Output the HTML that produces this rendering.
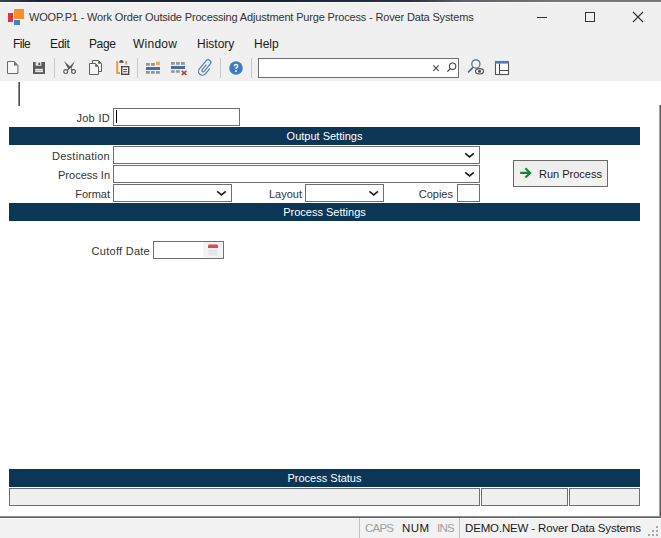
<!DOCTYPE html>
<html><head><meta charset="utf-8">
<style>
*{margin:0;padding:0;box-sizing:border-box}
html,body{width:661px;height:538px;overflow:hidden;background:#fff}
body{position:relative;font-family:"Liberation Sans",sans-serif;font-size:11px;color:#222}
.a{position:absolute}
.t{position:absolute;white-space:nowrap;line-height:13px}
#topbar{left:0;top:0;width:661px;height:2px;background:linear-gradient(to right,#3a4050 0%,#1e2438 6%,#1c2236 40%,#2a3044 62%,#5e6068 70%,#7a7676 85%,#7c7878 100%)}
#chrome{left:0;top:2px;width:661px;height:79px;background:#f0f0f0;border-top:1px solid #fafafa}
.inp{position:absolute;background:#fff;border:1px solid #707070}
.hdr{position:absolute;left:9px;width:631px;height:18px;background:#0b3656;color:#fff;text-align:center;font-size:11px;line-height:18px}
.chev{position:absolute;width:10px;height:6px}
.lbl{position:absolute;white-space:nowrap;line-height:13px;color:#333;text-align:right}
.sb{position:absolute;background:#efefef;border:1px solid #6e6e6e}
</style></head><body>
<div id="topbar" class="a"></div>
<div id="chrome" class="a"></div>

<!-- app icon -->
<div class="a" style="left:8px;top:13px;width:5px;height:9px;background:#d8334a"></div>
<div class="a" style="left:14px;top:9px;width:10px;height:10px;background:#f7902a"></div>
<div class="a" style="left:14px;top:20px;width:6px;height:5px;background:#3f84c9"></div>
<div class="t" style="left:29px;top:11px;font-size:11px;letter-spacing:-0.16px;color:#333">WOOP.P1 - Work Order Outside Processing Adjustment Purge Process - Rover Data Systems</div>

<!-- window controls -->
<div class="a" style="left:537px;top:17px;width:10px;height:1px;background:#333"></div>
<div class="a" style="left:585px;top:12px;width:10px;height:10px;border:1px solid #333"></div>
<svg class="a" style="left:632px;top:11px" width="12" height="12" viewBox="0 0 12 12"><path d="M1 1L11 11M11 1L1 11" stroke="#333" stroke-width="1.1" fill="none"/></svg>

<!-- menu -->
<div class="t" style="left:13px;top:38px;font-size:12px;letter-spacing:-0.55px;color:#1a1a1a">File</div>
<div class="t" style="left:50px;top:38px;font-size:12px;letter-spacing:-0.3px;color:#1a1a1a">Edit</div>
<div class="t" style="left:89px;top:38px;font-size:12px;letter-spacing:-0.4px;color:#1a1a1a">Page</div>
<div class="t" style="left:133px;top:38px;font-size:12px;letter-spacing:0.25px;color:#1a1a1a">Window</div>
<div class="t" style="left:197px;top:38px;font-size:12px;color:#1a1a1a">History</div>
<div class="t" style="left:254px;top:38px;font-size:12px;color:#1a1a1a">Help</div>

<!-- toolbar separators -->
<div class="a" style="left:54px;top:58px;width:1px;height:20px;background:#c8c8c8"></div>
<div class="a" style="left:137px;top:58px;width:1px;height:20px;background:#c8c8c8"></div>
<div class="a" style="left:220px;top:58px;width:1px;height:20px;background:#c8c8c8"></div>
<div class="a" style="left:251px;top:58px;width:1px;height:20px;background:#c8c8c8"></div>

<!-- search box -->
<div class="inp" style="left:258px;top:58px;width:201px;height:20px"></div>

<!-- toolbar icons -->
<svg class="a" style="left:0;top:0" width="661" height="81" viewBox="0 0 661 81">
<!-- new doc -->
<path d="M7.5 61.5H14.2L17.9 65.2V73.5H7.5Z" fill="#f6f6f6" stroke="#6a6a6a" stroke-width="1"/>
<path d="M14 61.5V65.4H17.9Z" fill="#6a6a6a"/>
<!-- save -->
<path d="M33 62H45V74H33Z" fill="#5a5a5a"/>
<rect x="35.6" y="62" width="5.8" height="3.8" fill="#e6e6e6"/>
<rect x="38.4" y="62.7" width="1.8" height="2.4" fill="#5a5a5a"/>
<rect x="35.2" y="68.8" width="7.8" height="3.4" fill="#e6e6e6"/>
<rect x="35.2" y="70.1" width="7.8" height="0.8" fill="#b4b4b4"/>
<!-- scissors -->
<path d="M64 61L71.2 67.6L68.6 69.8Z" fill="#5a5a5a"/>
<path d="M74.8 61L71.4 68.4L69.6 66.8Z" fill="#5a5a5a"/>
<path d="M68.8 69.2L66.8 70.2M70.8 68.8L72.6 70.2" stroke="#5a5a5a" stroke-width="1.1"/>
<circle cx="65.7" cy="71.6" r="1.95" fill="none" stroke="#5a5a5a" stroke-width="1.1"/>
<circle cx="73.5" cy="71.6" r="1.95" fill="none" stroke="#5a5a5a" stroke-width="1.1"/>
<!-- copy -->
<path d="M92.5 60.5H98.5L101.5 63.5V71.5H92.5Z" fill="#f4f4f4" stroke="#606060" stroke-width="1"/>
<path d="M98.2 60.5V63.8H101.5Z" fill="#606060"/>
<path d="M89.5 63.5H95.5L98.5 66.5V74.5H89.5Z" fill="#f4f4f4" stroke="#606060" stroke-width="1"/>
<path d="M95.2 63.5V66.8H98.5Z" fill="#606060"/>
<!-- paste -->
<path d="M117.2 61V73H120" fill="none" stroke="#ef9a3a" stroke-width="2"/>
<rect x="125.3" y="61" width="1.8" height="3.6" fill="#e2a040"/>
<path d="M119.2 62.8Q119.4 60 121.5 60Q123.6 60 123.8 62.8Z" fill="#4a4a4a"/>
<rect x="121.7" y="66.7" width="7" height="7.6" fill="#fff" stroke="#4a4a4a" stroke-width="1.4"/>
<rect x="123.2" y="69" width="4" height="1" fill="#4a4a4a"/>
<rect x="123.2" y="71.2" width="4" height="1" fill="#4a4a4a"/>
<!-- insert row -->
<rect x="146" y="63" width="3.8" height="2.8" fill="#969696"/>
<rect x="151" y="63" width="3.8" height="2.8" fill="#969696"/>
<rect x="156" y="61.6" width="3.8" height="3.6" fill="#f3a751"/>
<rect x="146" y="67" width="14" height="3" fill="#4170a8"/>
<rect x="146" y="71" width="3.8" height="2.8" fill="#969696"/>
<rect x="151" y="71" width="3.8" height="2.8" fill="#969696"/>
<rect x="156" y="71" width="3.8" height="2.8" fill="#969696"/>
<!-- delete row -->
<rect x="171" y="62" width="3.8" height="2.8" fill="#969696"/>
<rect x="176" y="62" width="3.8" height="2.8" fill="#969c90"/>
<rect x="181" y="62" width="3.8" height="2.8" fill="#969696"/>
<rect x="171" y="66" width="14" height="3" fill="#4170a8"/>
<rect x="171" y="70.2" width="3.8" height="2.6" fill="#969696"/>
<rect x="176" y="70.2" width="3.8" height="2.6" fill="#969c90"/>
<path d="M181.8 70.8L186.4 75M186.4 70.8L181.8 75" stroke="#d42b3a" stroke-width="1.6"/>
<!-- paperclip -->
<g transform="translate(205.6 67.5) rotate(40) scale(1.08)"><path d="M-1.2 -5.2V3.6A1.2 1.2 0 0 0 1.2 3.6V-5.2A1.2 1.2 0 0 0 -1.2 -5.2" fill="#dcecf8"/><path d="M3.6 -1.6V4.6A3.6 3.6 0 0 1 -3.6 4.6V-5.2A2.4 2.4 0 0 1 1.2 -5.2V3.6A1.2 1.2 0 0 1 -1.2 3.6V-2.6" fill="none" stroke="#5a7fa8" stroke-width="1.1"/></g>
<!-- help -->
<circle cx="236" cy="68" r="6.8" fill="#3d7cc2"/>
<path d="M234.3 66.2Q234.3 64.5 236 64.5Q237.7 64.5 237.7 66Q237.7 66.9 236.7 67.5Q236 67.9 236 69" fill="none" stroke="#fff" stroke-width="1.4"/>
<rect x="235.2" y="70.2" width="1.6" height="1.7" fill="#fff"/>
<!-- search x and magnifier -->
<path d="M433.3 65.4L438.7 70.8M438.7 65.4L433.3 70.8" stroke="#444" stroke-width="1.1"/>
<circle cx="452.6" cy="66.2" r="3.2" fill="none" stroke="#444" stroke-width="1.1"/>
<path d="M450.3 68.6L447.4 71.6" stroke="#444" stroke-width="1.3"/>
<!-- find -->
<circle cx="475.9" cy="63.9" r="4.1" fill="#f2f6fa" stroke="#566476" stroke-width="1.15"/>
<path d="M472.8 67.6L468.6 71.8" stroke="#4c6c92" stroke-width="1.7" stroke-linecap="round"/>
<ellipse cx="479.5" cy="71.3" rx="4" ry="2.7" fill="#f4f4f4" stroke="#4e4e4e" stroke-width="1.1"/>
<circle cx="479.5" cy="71.3" r="1.5" fill="#4e4e4e"/>
<!-- layout -->
<rect x="495.5" y="61.5" width="13" height="13" fill="#fff" stroke="#555" stroke-width="1.1"/>
<rect x="495" y="61" width="14" height="2.6" fill="#4a7ab8"/>
<path d="M499.5 63.5V74M499.5 70.5H508.5" stroke="#4a4a4a" stroke-width="1"/>
</svg>

<!-- content -->
<div class="a" style="left:18px;top:82px;width:1px;height:24px;background:#8a8a8a"></div><div class="a" style="left:19px;top:82px;width:1px;height:24px;background:#505050"></div>
<div class="a" style="left:659px;top:105px;width:1px;height:411px;background:#a4a4a4"></div><div class="a" style="left:660px;top:105px;width:1px;height:411px;background:#5a5a5a"></div>

<div class="lbl" style="left:60px;width:50px;top:112px;letter-spacing:0.3px">Job ID</div>
<div class="inp" style="left:113px;top:108px;width:127px;height:18px"></div>
<div class="a" style="left:116px;top:110px;width:1px;height:13px;background:#000"></div>

<div class="hdr" style="top:127px">Output Settings</div>

<div class="lbl" style="left:20px;width:90px;top:150px;letter-spacing:0.27px">Destination</div>
<div class="inp" style="left:113px;top:146px;width:367px;height:18px"></div>
<div class="lbl" style="left:20px;width:90px;top:169px">Process In</div>
<div class="inp" style="left:113px;top:165px;width:367px;height:18px"></div>
<div class="lbl" style="left:20px;width:90px;top:188px">Format</div>
<div class="inp" style="left:113px;top:184px;width:119px;height:18px"></div>
<div class="lbl" style="left:250px;width:52px;top:188px">Layout</div>
<div class="inp" style="left:305px;top:184px;width:79px;height:18px"></div>
<div class="lbl" style="left:400px;width:53px;top:188px">Copies</div>
<div class="inp" style="left:457px;top:184px;width:23px;height:18px"></div>

<div class="a" style="left:513px;top:160px;width:95px;height:27px;background:linear-gradient(#ededed,#f3f3f3);border:1px solid #6a6a6a"></div>
<div class="t" style="left:539px;top:168px;font-size:11px;color:#222">Run Process</div>

<div class="hdr" style="top:203px">Process Settings</div>

<div class="lbl" style="left:50px;width:100px;top:245px;letter-spacing:0.27px">Cutoff Date</div>
<div class="inp" style="left:153px;top:241px;width:71px;height:18px"></div>

<!-- chevrons -->
<svg class="a" style="left:0;top:0" width="661" height="300" viewBox="0 0 661 300"><g fill="none" stroke="#1a1a1a" stroke-width="1.5"><path d="M465.2 153.3L469.5 156.9L473.8 153.3"/><path d="M465.2 172.3L469.5 175.9L473.8 172.3"/><path d="M217.2 191.3L221.5 194.9L225.8 191.3"/><path d="M369.4 191.3L373.7 194.9L378.0 191.3"/></g>
<!-- run arrow -->
<path d="M520.2 172.9H530M525.4 168.2L530.2 172.9L525.4 177.6" fill="none" stroke="#0e8a2e" stroke-width="2.1"/>
<!-- calendar -->
<rect x="203" y="242" width="20" height="16" fill="#f4f4f4"/>
<rect x="208" y="245" width="10" height="11" fill="#e8eef0"/>
<path d="M208 248V246Q208 244.6 209.4 244.6H216.6Q218 244.6 218 246V248Z" fill="#dc4b4b"/>
<rect x="209" y="250.5" width="8" height="0.8" fill="#cfdadd"/>
<rect x="209" y="253.3" width="8" height="0.8" fill="#cfdadd"/>
</svg>

<div class="hdr" style="top:469px">Process Status</div>
<div class="sb" style="left:9px;top:488px;width:471px;height:18px"></div>
<div class="sb" style="left:481px;top:488px;width:87px;height:18px"></div>
<div class="sb" style="left:569px;top:488px;width:71px;height:18px"></div>

<!-- status bar -->
<div class="a" style="left:0;top:516px;width:661px;height:22px;background:linear-gradient(#8c8c8c 0,#8c8c8c 1px,#666 1px,#666 2px,#fafafa 2px,#fafafa 3px,#f2f2f2 3px)"></div>
<div class="a" style="left:359px;top:518px;width:1px;height:20px;background:#c0c0c0"></div>
<div class="a" style="left:459px;top:518px;width:1px;height:20px;background:#c0c0c0"></div>
<div class="t" style="left:365px;top:521.5px;font-size:11.5px;letter-spacing:-0.8px;color:#a0a0a0">CAPS</div>
<div class="t" style="left:402px;top:521.5px;font-size:11.5px;letter-spacing:0.4px;color:#1a1a1a">NUM</div>
<div class="t" style="left:437px;top:521.5px;font-size:11.5px;letter-spacing:-0.7px;color:#a0a0a0">INS</div>
<div class="t" style="left:465px;top:521.5px;font-size:11.5px;letter-spacing:-0.15px;color:#1a1a1a">DEMO.NEW - Rover Data Systems</div>
<svg class="a" style="left:645px;top:522px" width="16" height="16" viewBox="645 522 16 16" fill="#a8a8a8">
<rect x="656" y="526" width="2" height="2"/>
<rect x="652" y="530" width="2" height="2"/><rect x="656" y="530" width="2" height="2"/>
<rect x="648" y="534" width="2" height="2"/><rect x="652" y="534" width="2" height="2"/><rect x="656" y="534" width="2" height="2"/>
</svg>
</body></html>
